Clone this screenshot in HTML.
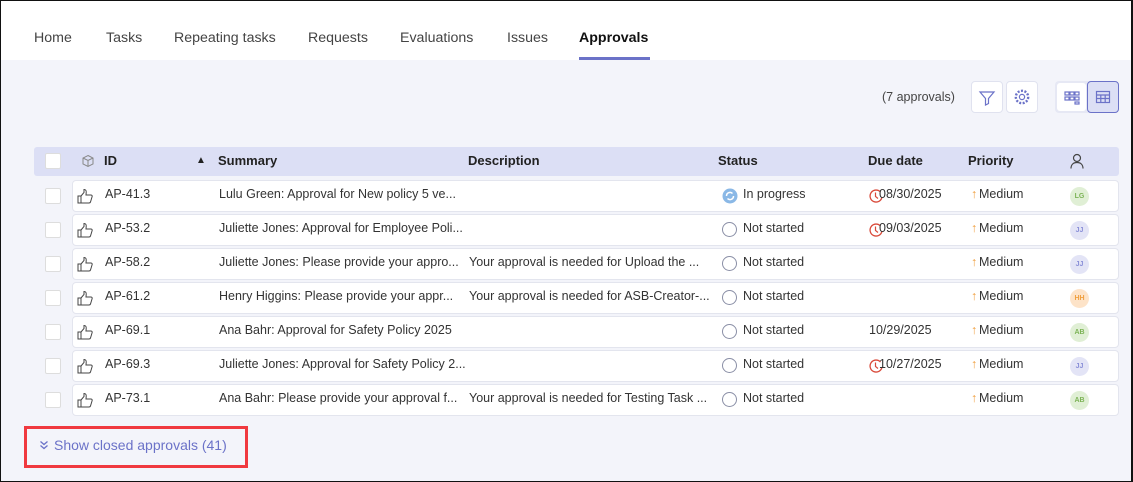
<!DOCTYPE html>
<html><head><meta charset="utf-8"><style>
*{box-sizing:border-box;margin:0;padding:0}
body{width:1133px;height:482px;overflow:hidden;font-family:"Liberation Sans",sans-serif;background:#f3f4fa;position:relative;color:#333}
.frame{position:absolute;left:0;top:0;width:1133px;height:482px;border:1px solid #111;border-right-width:2px;pointer-events:none;z-index:10}
.tabs{position:absolute;left:0;top:0;width:1133px;height:60px;background:#fff}
.tab{position:absolute;top:30px;font-size:14.2px;color:#444}
.tab.act{font-weight:bold;color:#111}
.ul{position:absolute;left:579px;top:57px;width:71px;height:3px;background:#6b72c8}
.abs{position:absolute}
.btn{position:absolute;top:81px;width:32px;height:32px;background:#fff;border:1px solid #e0e2ef;border-radius:4px}
.hdr{position:absolute;left:34px;top:147px;width:1085px;height:29px;background:#dcdff5;border-radius:3px}
.hdr span{position:absolute;top:6px;font-size:13px;font-weight:bold;color:#222}
.cb{position:absolute;width:16px;height:16px;background:#fff;border:1px solid #ddd;border-radius:2px}
.row{position:absolute;left:72px;width:1047px;height:32px;background:#fff;border:1px solid #e3e5ee;border-radius:4px}
.row span{position:absolute;top:6px;font-size:12.5px;color:#333;white-space:nowrap}
.av{position:absolute;left:997px;top:6px;width:19px;height:19px;border-radius:50%;font-size:7px;font-weight:bold;text-align:center;line-height:19px}
.ns{position:absolute;left:649px;top:7px;width:15px;height:15px;border-radius:50%;border:1.5px solid #8a8fa6}
</style></head><body>
<div class="tabs">
<span class="tab" style="left:34px">Home</span>
<span class="tab" style="left:106px">Tasks</span>
<span class="tab" style="left:174px">Repeating tasks</span>
<span class="tab" style="left:308px">Requests</span>
<span class="tab" style="left:400px">Evaluations</span>
<span class="tab" style="left:507px">Issues</span>
<span class="tab act" style="left:579px">Approvals</span>
<div class="ul"></div>
</div>
<span class="abs" style="left:882px;top:90px;font-size:12.5px;color:#444">(7 approvals)</span>
<div class="btn" style="left:971px"><svg width="30" height="30" viewBox="0 0 30 30"><path d="M8 10h14l-5.5 6.5v5l-3 1.5v-6.5z" fill="none" stroke="#6b72c8" stroke-width="1.2"/></svg></div>
<div class="btn" style="left:1006px"><svg width="30" height="30" viewBox="0 0 30 30"><circle cx="15" cy="15" r="2.6" fill="none" stroke="#6b72c8" stroke-width="1.2"/><circle cx="15" cy="15" r="6.2" fill="none" stroke="#6b72c8" stroke-width="2.4" stroke-dasharray="2 1.5"/></svg></div>
<div class="abs" style="left:1055px;top:81px;width:64px;height:32px;background:#e6e8f4;border-radius:4px"></div>
<div class="abs" style="left:1057px;top:83px;width:29px;height:28px;background:#fff;border-radius:3px"><svg width="29" height="28"><g fill="none" stroke="#6b72c8" stroke-width="1.2"><rect x="8" y="9" width="4" height="3"/><rect x="13" y="9" width="4" height="3"/><rect x="18" y="9" width="4" height="3"/><rect x="8" y="14" width="4" height="3"/><rect x="13" y="14" width="4" height="3"/><rect x="18" y="14" width="4" height="3"/><rect x="18" y="19" width="4" height="2"/></g></svg></div>
<div class="abs" style="left:1087px;top:81px;width:32px;height:32px;background:#dcdff5;border:1px solid #6b72c8;border-radius:4px"><svg width="30" height="30"><g fill="none" stroke="#6b72c8" stroke-width="1.2"><rect x="8.5" y="9.5" width="13" height="11"/><path d="M8.5 13h13M8.5 16.5h13M12.8 13v7.5M17.2 13v7.5"/></g></svg></div>

<div class="hdr">
<div class="cb" style="left:11px;top:6px"></div>
<svg class="abs" style="left:47px;top:7px" width="14" height="14" viewBox="0 0 14 14"><path d="M7 1.5l5 2.5v6l-5 2.5-5-2.5v-6zM2 4l5 2.5 5-2.5M7 6.5v6" fill="none" stroke="#888" stroke-width="1"/></svg>
<span style="left:70px">ID</span>
<span style="left:162px;font-size:10px;top:8px">▲</span>
<span style="left:184px">Summary</span>
<span style="left:434px">Description</span>
<span style="left:684px">Status</span>
<span style="left:834px">Due date</span>
<span style="left:934px">Priority</span>
<svg class="abs" style="left:1035px;top:6px" width="16" height="16" viewBox="0 0 16 16"><circle cx="8" cy="5" r="3.5" fill="none" stroke="#444" stroke-width="1.2"/><path d="M2 15.5c0-4 2.5-6 6-6s6 2 6 6" fill="none" stroke="#444" stroke-width="1.2"/></svg>
</div>

<div class="cb" style="left:45px;top:188px"></div><div class="row" style="top:180px"><svg class="abs" style="left:4px;top:7px" width="16" height="16" viewBox="0 0 16 16"><path d="M1 8h3v7H1zM4 8l3-3.5V1.5c1.5 0 2.5 1 2.2 3L9 7h5c1 0 1.5 1 1 2l-1.5 5c-.3.7-.8 1-1.5 1H4" fill="none" stroke="#444" stroke-width="1"/></svg><span style="left:32px">AP-41.3</span><span style="left:146px">Lulu Green: Approval for New policy 5 ve...</span><svg class="abs" style="left:649px;top:7px" width="16" height="16"><circle cx="8" cy="8" r="7.5" fill="#8ab8e6"/><path d="M4.5 8a3.5 3.5 0 0 1 6-2.5M11.5 8a3.5 3.5 0 0 1-6 2.5" fill="none" stroke="#fff" stroke-width="1.5"/></svg><span style="left:670px">In progress</span><svg class="abs" style="left:795px;top:7px" width="16" height="16"><path d="M12.5 4A6 6 0 1 0 14 9" fill="none" stroke="#d94a3a" stroke-width="1.3"/><path d="M7.5 4.5v4l2.5 2" fill="none" stroke="#d94a3a" stroke-width="1.2"/></svg><span style="left:806px">08/30/2025</span><span style="left:898px;color:#f0a040">↑</span><span style="left:906px">Medium</span><div class="av" style="background:#e0efd5;color:#7cb356">LG</div></div>

<div class="cb" style="left:45px;top:222px"></div><div class="row" style="top:214px"><svg class="abs" style="left:4px;top:7px" width="16" height="16" viewBox="0 0 16 16"><path d="M1 8h3v7H1zM4 8l3-3.5V1.5c1.5 0 2.5 1 2.2 3L9 7h5c1 0 1.5 1 1 2l-1.5 5c-.3.7-.8 1-1.5 1H4" fill="none" stroke="#444" stroke-width="1"/></svg><span style="left:32px">AP-53.2</span><span style="left:146px">Juliette Jones: Approval for Employee Poli...</span><div class="ns"></div><span style="left:670px">Not started</span><svg class="abs" style="left:795px;top:7px" width="16" height="16"><path d="M12.5 4A6 6 0 1 0 14 9" fill="none" stroke="#d94a3a" stroke-width="1.3"/><path d="M7.5 4.5v4l2.5 2" fill="none" stroke="#d94a3a" stroke-width="1.2"/></svg><span style="left:806px">09/03/2025</span><span style="left:898px;color:#f0a040">↑</span><span style="left:906px">Medium</span><div class="av" style="background:#e3e4f6;color:#8a8fd8">JJ</div></div>

<div class="cb" style="left:45px;top:256px"></div><div class="row" style="top:248px"><svg class="abs" style="left:4px;top:7px" width="16" height="16" viewBox="0 0 16 16"><path d="M1 8h3v7H1zM4 8l3-3.5V1.5c1.5 0 2.5 1 2.2 3L9 7h5c1 0 1.5 1 1 2l-1.5 5c-.3.7-.8 1-1.5 1H4" fill="none" stroke="#444" stroke-width="1"/></svg><span style="left:32px">AP-58.2</span><span style="left:146px">Juliette Jones: Please provide your appro...</span><span style="left:396px">Your approval is needed for Upload the ...</span><div class="ns"></div><span style="left:670px">Not started</span><span style="left:898px;color:#f0a040">↑</span><span style="left:906px">Medium</span><div class="av" style="background:#e3e4f6;color:#8a8fd8">JJ</div></div>

<div class="cb" style="left:45px;top:290px"></div><div class="row" style="top:282px"><svg class="abs" style="left:4px;top:7px" width="16" height="16" viewBox="0 0 16 16"><path d="M1 8h3v7H1zM4 8l3-3.5V1.5c1.5 0 2.5 1 2.2 3L9 7h5c1 0 1.5 1 1 2l-1.5 5c-.3.7-.8 1-1.5 1H4" fill="none" stroke="#444" stroke-width="1"/></svg><span style="left:32px">AP-61.2</span><span style="left:146px">Henry Higgins: Please provide your appr...</span><span style="left:396px">Your approval is needed for ASB-Creator-...</span><div class="ns"></div><span style="left:670px">Not started</span><span style="left:898px;color:#f0a040">↑</span><span style="left:906px">Medium</span><div class="av" style="background:#fde3c8;color:#f0a040">HH</div></div>

<div class="cb" style="left:45px;top:324px"></div><div class="row" style="top:316px"><svg class="abs" style="left:4px;top:7px" width="16" height="16" viewBox="0 0 16 16"><path d="M1 8h3v7H1zM4 8l3-3.5V1.5c1.5 0 2.5 1 2.2 3L9 7h5c1 0 1.5 1 1 2l-1.5 5c-.3.7-.8 1-1.5 1H4" fill="none" stroke="#444" stroke-width="1"/></svg><span style="left:32px">AP-69.1</span><span style="left:146px">Ana Bahr: Approval for Safety Policy 2025</span><div class="ns"></div><span style="left:670px">Not started</span><span style="left:796px">10/29/2025</span><span style="left:898px;color:#f0a040">↑</span><span style="left:906px">Medium</span><div class="av" style="background:#e0efd5;color:#7cb356">AB</div></div>

<div class="cb" style="left:45px;top:358px"></div><div class="row" style="top:350px"><svg class="abs" style="left:4px;top:7px" width="16" height="16" viewBox="0 0 16 16"><path d="M1 8h3v7H1zM4 8l3-3.5V1.5c1.5 0 2.5 1 2.2 3L9 7h5c1 0 1.5 1 1 2l-1.5 5c-.3.7-.8 1-1.5 1H4" fill="none" stroke="#444" stroke-width="1"/></svg><span style="left:32px">AP-69.3</span><span style="left:146px">Juliette Jones: Approval for Safety Policy 2...</span><div class="ns"></div><span style="left:670px">Not started</span><svg class="abs" style="left:795px;top:7px" width="16" height="16"><path d="M12.5 4A6 6 0 1 0 14 9" fill="none" stroke="#d94a3a" stroke-width="1.3"/><path d="M7.5 4.5v4l2.5 2" fill="none" stroke="#d94a3a" stroke-width="1.2"/></svg><span style="left:806px">10/27/2025</span><span style="left:898px;color:#f0a040">↑</span><span style="left:906px">Medium</span><div class="av" style="background:#e3e4f6;color:#8a8fd8">JJ</div></div>

<div class="cb" style="left:45px;top:392px"></div><div class="row" style="top:384px"><svg class="abs" style="left:4px;top:7px" width="16" height="16" viewBox="0 0 16 16"><path d="M1 8h3v7H1zM4 8l3-3.5V1.5c1.5 0 2.5 1 2.2 3L9 7h5c1 0 1.5 1 1 2l-1.5 5c-.3.7-.8 1-1.5 1H4" fill="none" stroke="#444" stroke-width="1"/></svg><span style="left:32px">AP-73.1</span><span style="left:146px">Ana Bahr: Please provide your approval f...</span><span style="left:396px">Your approval is needed for Testing Task ...</span><div class="ns"></div><span style="left:670px">Not started</span><span style="left:898px;color:#f0a040">↑</span><span style="left:906px">Medium</span><div class="av" style="background:#e0efd5;color:#7cb356">AB</div></div>

<div class="abs" style="left:24px;top:426px;width:224px;height:42px;border:3px solid #f0393f"></div>
<svg class="abs" style="left:39px;top:440px" width="10" height="10"><path d="M1.5 1.5l3.5 3 3.5-3M1.5 5.5l3.5 3 3.5-3" fill="none" stroke="#6b72c8" stroke-width="1.3"/></svg>
<span class="abs" style="left:54px;top:437px;font-size:14px;color:#6b72c8">Show closed approvals (41)</span>
<div class="frame"></div>
</body></html>
